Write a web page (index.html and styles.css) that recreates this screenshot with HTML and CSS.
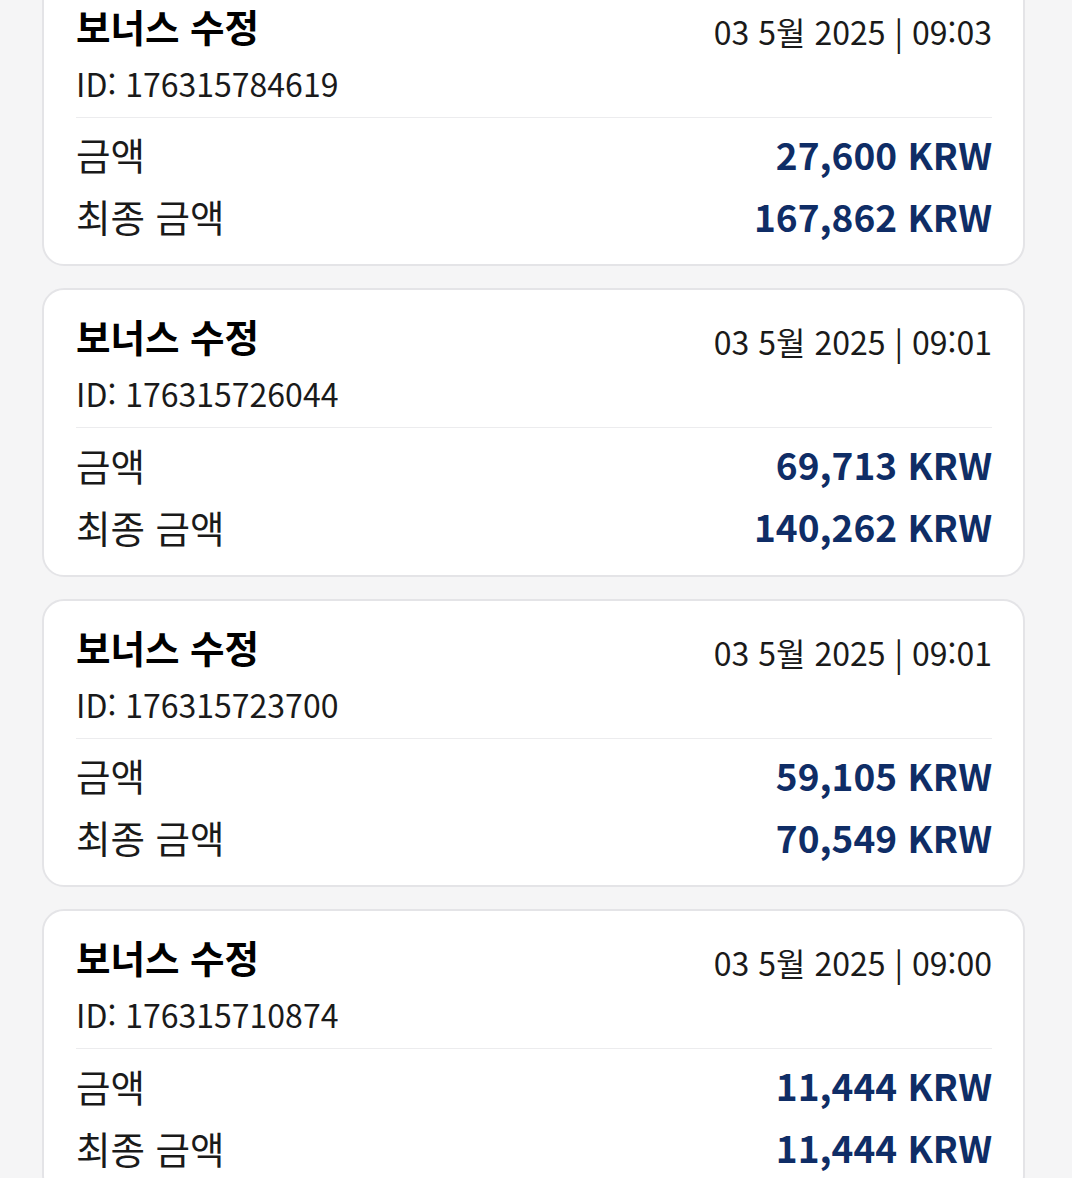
FILE: index.html
```html
<!DOCTYPE html>
<html lang="ko">
<head>
<meta charset="utf-8">
<link rel="stylesheet" href="styles.css">
</head>
<body>
<div class="list">
  <div class="card">
    <div class="head">
      <div class="info">
        <div class="title">보너스 수정</div>
        <div class="id">ID: 176315784619</div>
      </div>
      <div class="date">03 5월 2025 | 09:03</div>
    </div>
    <div class="rows">
      <div class="row"><span class="label">금액</span><span class="amt">27,600 KRW</span></div>
      <div class="row"><span class="label">최종 금액</span><span class="amt">167,862 KRW</span></div>
    </div>
  </div>
  <div class="card">
    <div class="head">
      <div class="info">
        <div class="title">보너스 수정</div>
        <div class="id">ID: 176315726044</div>
      </div>
      <div class="date">03 5월 2025 | 09:01</div>
    </div>
    <div class="rows">
      <div class="row"><span class="label">금액</span><span class="amt">69,713 KRW</span></div>
      <div class="row"><span class="label">최종 금액</span><span class="amt">140,262 KRW</span></div>
    </div>
  </div>
  <div class="card">
    <div class="head">
      <div class="info">
        <div class="title">보너스 수정</div>
        <div class="id">ID: 176315723700</div>
      </div>
      <div class="date">03 5월 2025 | 09:01</div>
    </div>
    <div class="rows">
      <div class="row"><span class="label">금액</span><span class="amt">59,105 KRW</span></div>
      <div class="row"><span class="label">최종 금액</span><span class="amt">70,549 KRW</span></div>
    </div>
  </div>
  <div class="card">
    <div class="head">
      <div class="info">
        <div class="title">보너스 수정</div>
        <div class="id">ID: 176315710874</div>
      </div>
      <div class="date">03 5월 2025 | 09:00</div>
    </div>
    <div class="rows">
      <div class="row"><span class="label">금액</span><span class="amt">11,444 KRW</span></div>
      <div class="row"><span class="label">최종 금액</span><span class="amt">11,444 KRW</span></div>
    </div>
  </div>
</div>
</body>
</html>
```
FILE: styles.css
```css
html, body {
  margin: 0;
  padding: 0;
  background: #f5f5f6;
  overflow: hidden;
}
body {
  font-family: "Noto Sans CJK KR", "Noto Sans", sans-serif;
  color: #111;
}
.list {
  display: flex;
  flex-direction: column;
  gap: 22px;
  margin: -22.5px 47px 0 42px;
}
.card {
  background: #fff;
  border: 2px solid #e4e4e7;
  border-radius: 22px;
  padding: 22px 31px 15px 32px;
  height: 288.5px;
  box-sizing: border-box;
}
.head {
  display: flex;
  justify-content: space-between;
  align-items: flex-start;
  border-bottom: 1px solid #ececee;
  padding-bottom: 10px;
}
.title {
  font-size: 37.5px;
  font-weight: 700;
  line-height: 48px;
  color: #000;
}
.id {
  font-size: 32px;
  line-height: 48px;
  margin-top: 9px;
  color: #1a1a1a;
}
.date {
  font-size: 32px;
  line-height: 48px;
  margin-top: 5px;
  color: #1a1a1a;
}
.rows {
  padding-top: 5px;
}
.row {
  display: flex;
  justify-content: space-between;
  align-items: center;
  height: 62px;
}
.label {
  font-size: 37.5px;
  color: #1a1a1a;
}
.amt {
  font-size: 37px;
  font-weight: 700;
  color: #0f2d66;
}
```
